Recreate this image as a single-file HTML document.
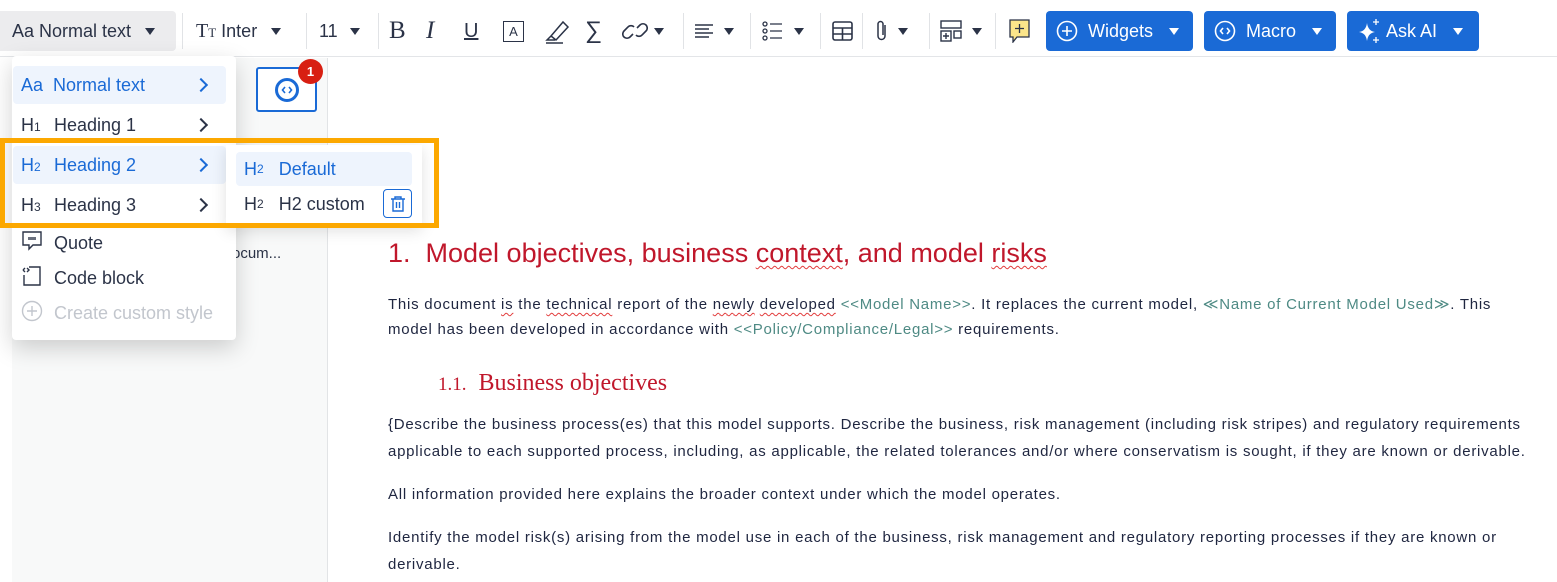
<!DOCTYPE html>
<html><head><meta charset="utf-8"><style>
*{box-sizing:border-box;margin:0;padding:0}
body{width:1557px;height:582px;overflow:hidden;background:#fff;font-family:"Liberation Sans",sans-serif;position:relative;color:#2b3347}
.tb{position:absolute;left:0;top:0;width:1557px;height:57px;border-bottom:1px solid #e3e5e8;background:#fff}
.it{position:absolute;top:11px;height:40px;display:flex;align-items:center;font-size:18px;color:#2b3347}
.sep{position:absolute;top:13px;width:1px;height:36px;background:#e1e3e6}
.car{display:inline-block;width:0;height:0;border-left:5px solid transparent;border-right:5px solid transparent;border-top:7px solid #2b3347;margin-left:10px}
.btn{position:absolute;top:11px;height:40px;background:#1a6ad6;border-radius:4px;color:#fff;display:flex;align-items:center;font-size:18px;padding-left:10px}
.btn .car{border-top-color:#fff;margin-left:16px}
.panel{position:absolute;left:12px;top:58px;width:316px;height:524px;background:#f8f9f9;border-right:1px solid #e2e4e6}
.menu{position:absolute;left:12px;top:56px;width:224px;height:284px;background:#fff;border-radius:4px;box-shadow:0 8px 24px rgba(0,0,0,.18)}
.mi{position:absolute;left:1px;width:213px;height:38px;display:flex;align-items:center;font-size:18px;color:#2b3347;padding-left:8px}
.mi .ic{width:33px;font-size:18px}
.mi .ch{position:absolute;right:20px;top:14px;width:10px;height:10px;border-right:2px solid #2b3347;border-top:2px solid #2b3347;transform:rotate(45deg)}
.sel{background:#eef4fd;color:#1a6ad6;border-radius:4px}
.sel .ch{border-color:#1a6ad6}
.sub{position:absolute;left:226px;top:145px;width:196px;height:82px;background:#fff;box-shadow:0 4px 14px rgba(0,0,0,.12)}
.box{position:absolute;left:0;top:138px;width:439px;height:90px;border:5px solid #fca800}
.doc{position:absolute;left:388px;font-size:15px;letter-spacing:0.75px;color:#1f2640;white-space:nowrap}
.ph{color:#4e8a84}
.sq{text-decoration:underline wavy #e23c3c;text-decoration-thickness:1px;text-underline-offset:3px}
</style></head><body>
<div class="tb">
 <div class="it" style="left:0;width:176px;background:#ececee;border-radius:0 4px 4px 0;padding-left:12px">Aa Normal text<span class="car" style="margin-left:14px"></span></div>
 <div class="sep" style="left:182px"></div>
 <div class="it" style="left:196px"><span style="font-family:'Liberation Serif';font-size:20px">T<small style="font-size:13px">T</small></span>&nbsp;Inter<span class="car" style="margin-left:14px"></span></div>
 <div class="sep" style="left:306px"></div>
 <div class="it" style="left:319px">11<span class="car" style="margin-left:12px"></span></div>
 <div class="sep" style="left:378px"></div>
 <div class="it" style="left:389px;font-family:'Liberation Serif';font-size:25px">B</div>
 <div class="it" style="left:426px;font-family:'Liberation Serif';font-size:25px;font-style:italic">I</div>
 <div class="it" style="left:464px;font-size:20px;text-decoration:underline">U</div>
 <div class="it" style="left:503px"><span style="border:1.5px solid #2b3347;width:21px;height:21px;display:flex;align-items:center;justify-content:center;font-size:13px">A</span></div>
 <div class="it" style="left:543px"><svg width="28" height="26" viewBox="0 0 28 26" fill="none" stroke="#2b3347" stroke-width="1.5"><path d="M8 18 L20 4 L25 9 L13 22 Z M8 18 l-4 4 h8 M3 25 H20"/></svg></div>
 <div class="it" style="left:585px;font-size:24px">∑</div>
 <div class="it" style="left:622px"><svg width="26" height="22" viewBox="0 0 26 22" fill="none" stroke="#2b3347" stroke-width="1.6"><path d="M11 14 l-3 3 a4 4 0 0 1 -6 -6 l4 -4 a4 4 0 0 1 6 0 M15 8 l3 -3 a4 4 0 0 1 6 6 l-4 4 a4 4 0 0 1 -6 0"/></svg><span class="car" style="margin-left:6px"></span></div>
 <div class="sep" style="left:683px"></div>
 <div class="it" style="left:694px"><svg width="20" height="18" stroke="#2b3347" stroke-width="1.5"><path d="M1 3H19M1 7H15M1 11H19M1 15H15"/></svg><span class="car"></span></div>
 <div class="sep" style="left:750px"></div>
 <div class="it" style="left:762px"><svg width="22" height="20" fill="none" stroke="#2b3347" stroke-width="1.3"><circle cx="3" cy="3" r="2"/><circle cx="3" cy="10" r="2"/><circle cx="3" cy="17" r="2"/><path d="M8 3H20M8 10H20M8 17H20"/></svg><span class="car"></span></div>
 <div class="sep" style="left:820px"></div>
 <div class="it" style="left:832px"><svg width="21" height="20" fill="none" stroke="#2b3347" stroke-width="1.6"><rect x="1" y="1" width="19" height="18" rx="2"/><path d="M1 7H20M1 13H20M10.5 7V19"/></svg></div>
 <div class="sep" style="left:862px"></div>
 <div class="it" style="left:874px"><svg width="16" height="24" fill="none" stroke="#2b3347" stroke-width="1.5"><path d="M11 6 V17 a3.5 3.5 0 0 1 -7 0 V5 a2.5 2.5 0 0 1 5 0 V16"/></svg><span class="car" style="margin-left:8px"></span></div>
 <div class="sep" style="left:929px"></div>
 <div class="it" style="left:940px"><svg width="22" height="22" fill="none" stroke="#2b3347" stroke-width="1.4"><rect x="1" y="1" width="20" height="7"/><rect x="1" y="11" width="10" height="10"/><rect x="14" y="11" width="7" height="7"/><path d="M6 13V19M3 16H9"/></svg><span class="car"></span></div>
 <div class="sep" style="left:995px"></div>
 <div class="it" style="left:1009px"><svg width="22" height="24"><path d="M1 1H20V18H8L4 23V18H1Z" fill="#fbe58a" stroke="#2b3347" stroke-width="1.3"/><path d="M10.5 5V14M6 9.5H15" stroke="#2b3347" stroke-width="1.3"/></svg></div>
 <div class="btn" style="left:1046px;width:147px"><svg width="22" height="22" fill="none" stroke="#fff" stroke-width="1.6"><circle cx="11" cy="11" r="9.5"/><path d="M11 6V16M6 11H16"/></svg>&nbsp;&nbsp;Widgets<span class="car"></span></div>
 <div class="btn" style="left:1204px;width:132px"><svg width="22" height="22" fill="none" stroke="#fff" stroke-width="1.6"><circle cx="11" cy="11" r="9.5"/><path d="M9 8L6.5 11L9 14M13 8L15.5 11L13 14"/></svg>&nbsp;&nbsp;Macro<span class="car"></span></div>
 <div class="btn" style="left:1347px;width:132px"><svg width="24" height="26" fill="#fff"><path d="M10 5 Q11 13 18 14 Q11 15 10 23 Q9 15 2 14 Q9 13 10 5Z"/><path d="M19 1V7M16 4H22M19 19V25M16 22H22" stroke="#fff" stroke-width="1.3"/></svg>&nbsp;Ask AI<span class="car"></span></div>
</div>
<div class="panel"></div>
<div style="position:absolute;left:256px;top:67px;width:61px;height:45px;border:2px solid #1a6ad6;border-radius:3px;background:#fff;display:flex;align-items:center;justify-content:center"><svg width="26" height="26" fill="none" stroke="#1a6ad6"><circle cx="13" cy="13" r="10.5" stroke-width="3"/><path d="M11 10L8.5 13L11 16M15 10L17.5 13L15 16" stroke-width="1.6"/></svg></div>
<div style="position:absolute;left:298px;top:59px;width:25px;height:25px;border-radius:50%;background:#d81f12;color:#fff;font-size:13px;font-weight:bold;display:flex;align-items:center;justify-content:center">1</div>
<div style="position:absolute;left:232px;top:245px;font-size:15px;color:#2b3347">ocum...</div>
<div class="menu">
 <div class="mi sel" style="top:10px;">Aa&nbsp;&nbsp;Normal text<span class="ch"></span></div>
 <div class="mi" style="top:50px"><span class="ic">H<small style="font-size:12px">1</small></span>Heading 1<span class="ch"></span></div>
 <div class="mi sel" style="top:90px"><span class="ic">H<small style="font-size:12px">2</small></span>Heading 2<span class="ch"></span></div>
 <div class="mi" style="top:130px"><span class="ic">H<small style="font-size:12px">3</small></span>Heading 3<span class="ch"></span></div>
 <div class="mi" style="top:168px"><span class="ic"><svg width="22" height="22" fill="none" stroke="#2b3347" stroke-width="1.4"><path d="M2 2H20V15H12L8 19V15H2Z"/><path d="M8 7v3M10 7v3M12 7v3M14 7v3"/></svg></span>Quote</div>
 <div class="mi" style="top:203px"><span class="ic"><svg width="22" height="22" fill="none" stroke="#2b3347" stroke-width="1.4"><path d="M8 2H19V20H3V10M2 5L4 3M2 5L4 7M6 3L8 5L6 7"/></svg></span>Code block</div>
 <div class="mi" style="top:238px;color:#c2c6cd"><span class="ic"><svg width="22" height="22" fill="none" stroke="#c2c6cd" stroke-width="1.4"><circle cx="11" cy="11" r="9.5"/><path d="M11 6V16M6 11H16"/></svg></span>Create custom style</div>
</div>
<div class="sub">
 <div class="mi sel" style="left:10px;top:7px;width:176px;height:34px">H<small style="font-size:12px">2</small>&nbsp;&nbsp;&nbsp;Default</div>
 <div class="mi" style="left:10px;top:42px;width:176px;height:34px">H<small style="font-size:12px">2</small>&nbsp;&nbsp;&nbsp;H2 custom</div>
 <div style="position:absolute;left:157px;top:44px;width:29px;height:29px;border:1px solid #1a6ad6;border-radius:4px;display:flex;align-items:center;justify-content:center"><svg width="16" height="18" fill="none" stroke="#1a6ad6" stroke-width="1.4"><path d="M1 4H15M5 4V2H11V4M3 4V16H13V4M6.5 7V13M9.5 7V13"/></svg></div>
</div>
<div class="box"></div>
<div class="doc" style="top:238px;font-size:27px;letter-spacing:0;color:#c0172b">1.&nbsp; Model objectives, business <span class="sq">context</span>, and model <span class="sq">risks</span></div>
<div class="doc" style="top:295px">This document <span class="sq">is</span> the <span class="sq">technical</span> report of the <span class="sq">newly</span> <span class="sq">developed</span> <span class="ph">&lt;&lt;Model Name&gt;&gt;</span>. It replaces the current model, <span class="ph">≪Name of Current Model Used≫</span>. This</div>
<div class="doc" style="top:321px">model has been developed in accordance with <span class="ph">&lt;&lt;Policy/Compliance/Legal&gt;&gt;</span> requirements.</div>
<div class="doc" style="left:438px;top:370px;font-family:'Liberation Serif',serif;font-size:24px;letter-spacing:0;color:#c0172b"><span style="font-size:19px">1.1.</span>&nbsp; Business objectives</div>
<div class="doc" style="top:416px">{Describe the business process(es) that this model supports. Describe the business, risk management (including risk stripes) and regulatory requirements</div>
<div class="doc" style="top:443px">applicable to each supported process, including, as applicable, the related tolerances and/or where conservatism is sought, if they are known or derivable.</div>
<div class="doc" style="top:486px">All information provided here explains the broader context under which the model operates.</div>
<div class="doc" style="top:529px">Identify the model risk(s) arising from the model use in each of the business, risk management and regulatory reporting processes if they are known or</div>
<div class="doc" style="top:556px">derivable.</div>
</body></html>
